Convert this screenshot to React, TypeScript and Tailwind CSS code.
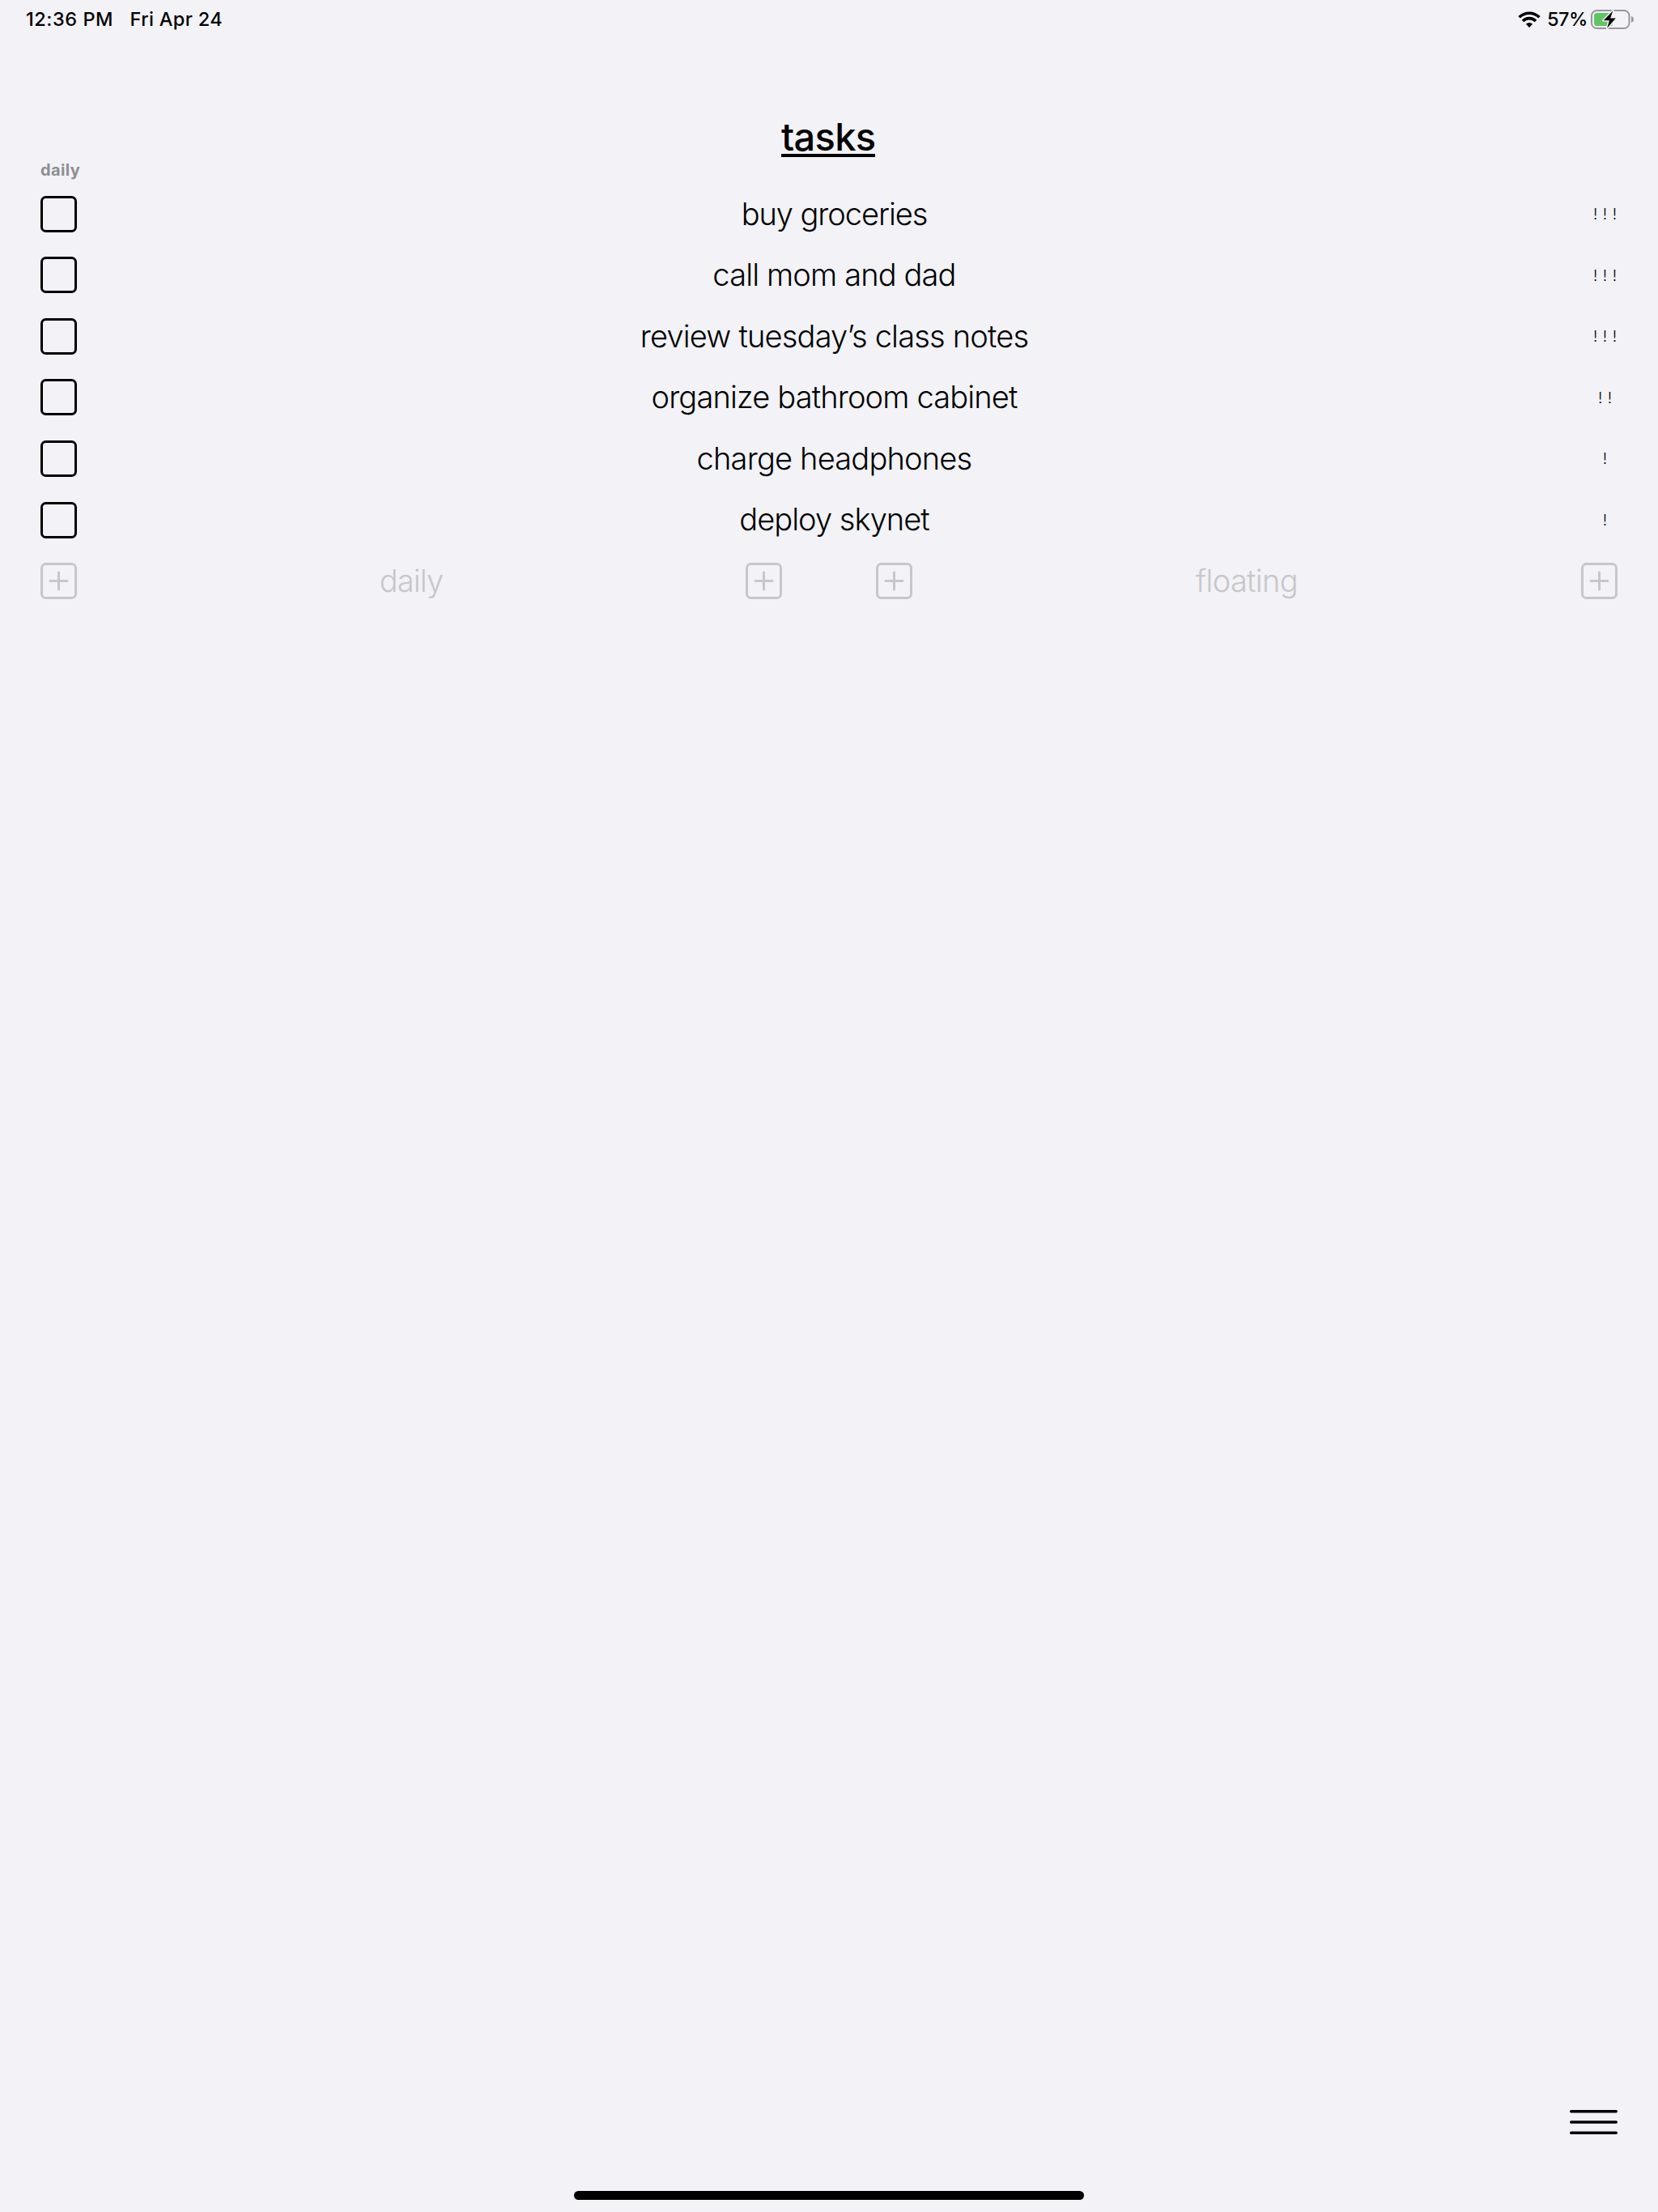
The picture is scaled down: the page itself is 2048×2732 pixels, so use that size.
const BG = '#f2f2f7';

type Task = { label: string; priority: string; spacing: string };

const tasks: Task[] = [
  { label: 'buy groceries', priority: '!!!', spacing: 'tracking-[-1.05px]' },
  { label: 'call mom and dad', priority: '!!!', spacing: 'tracking-[-0.85px]' },
  { label: 'review tuesday’s class notes', priority: '!!!', spacing: 'tracking-[-0.8px]' },
  { label: 'organize bathroom cabinet', priority: '!!', spacing: 'tracking-[-0.84px]' },
  { label: 'charge headphones', priority: '!', spacing: 'tracking-[-0.8px]' },
  { label: 'deploy skynet', priority: '!', spacing: 'tracking-[-0.95px]' },
];

function Wifi() {
  return (
    <svg className="block h-[22px] w-[28px]" viewBox="0 0 28 22" fill="none" stroke="#000" strokeWidth="3.6">
      <path d="M1.6 8.3a17.6 17.6 0 0 1 24.8 0" />
      <path d="M6 12.9a11.3 11.3 0 0 1 16 0" />
      <path d="M14 21l-4.1-4.2a5.8 5.8 0 0 1 8.2 0z" fill="#000" stroke="none" />
    </svg>
  );
}

function Battery() {
  return (
    <svg className="block h-[28px] w-[54px]" viewBox="0 0 54 28">
      <rect x="1" y="3" width="46.5" height="22" rx="6.5" fill="none" stroke="#98979b" strokeWidth="2" />
      <path d="M50 10c1.8.6 3 2.2 3 4s-1.2 3.4-3 4z" fill="#98979b" />
      <path d="M7.5 6H26.5V22H7.5A3.5 3.5 0 0 1 4 18.5V9.5A3.5 3.5 0 0 1 7.5 6z" fill="#62c466" />
      <path
        d="M27.2 3.5L15.7 15.3h7.2L20.2 24.7 30.8 12.5h-6.6z"
        fill="#000"
        stroke={BG}
        strokeWidth="3"
        paintOrder="stroke"
        strokeLinejoin="round"
      />
    </svg>
  );
}

function AddBox() {
  return (
    <svg className="block size-[45px] shrink-0" viewBox="0 0 45 45" fill="none" stroke="#c7c6cb" strokeWidth="3">
      <rect x="1.5" y="1.5" width="42" height="42" rx="5" />
      <path d="M22.5 12v21M12 22.5h21" strokeLinecap="round" />
    </svg>
  );
}

function TaskRow({ task }: { task: Task }) {
  return (
    <div className="flex h-[75.6px] items-center">
      <div className="size-[45px] shrink-0 rounded-[6.5px] border-[3px] border-black" />
      <div
        className={`flex-1 pr-[1px] pb-[1.2px] text-center text-[38px] leading-[46px] font-light whitespace-nowrap ${task.spacing}`}
      >
        {task.label}
      </div>
      <div className="flex w-[31px] justify-center pt-[2px] text-[19px] leading-6 font-light">
        {task.priority.split('').map((mark, i) => (
          <span key={i} className="w-[11.8px] shrink-0 text-center">
            {mark}
          </span>
        ))}
      </div>
    </div>
  );
}

export default function App() {
  return (
    <div className="flex h-[2732px] w-[2048px] flex-col bg-[#f2f2f7] font-['Inter',sans-serif] text-black">
      <header className="flex h-[48px] items-center justify-between pr-[29px] pl-[32px] text-[23.5px] leading-[48px] font-medium">
        <div className="flex gap-[20.5px]">
          <span className="tracking-[0.55px]">12:36 PM</span>
          <span className="tracking-[0.35px]">Fri Apr 24</span>
        </div>
        <div className="flex items-center">
          <Wifi />
          <span className="mr-[4px] ml-[8px] w-[50px] tracking-[-0.5px] whitespace-nowrap">57%</span>
          <Battery />
        </div>
      </header>

      <div className="flex h-[146px] items-end justify-center pr-[2px]">
        <h1 className="h-[60px] w-[116px] border-b-4 border-black text-center text-[47px] leading-[70px] font-medium tracking-[-0.7px] whitespace-nowrap">
          tasks
        </h1>
      </div>

      <div className="h-[32.3px] pl-[50px] text-[20px] leading-[32px] font-bold tracking-[0.35px] text-[#8e8e93]">
        daily
      </div>

      <main className="flex flex-col px-[50px]">
        {tasks.map((task) => (
          <TaskRow key={task.label} task={task} />
        ))}
        <div className="flex h-[75.6px] items-center text-[38px] leading-[46px] font-light text-[#c7c6cb]">
          <div className="flex w-[916px] items-center">
            <AddBox />
            <span className="-mt-[2px] flex-1 text-center tracking-[-0.9px]">daily</span>
            <AddBox />
          </div>
          <div className="ml-[116px] flex w-[916px] items-center">
            <AddBox />
            <span className="-mt-[2px] flex-1 text-center tracking-[-0.65px]">floating</span>
            <AddBox />
          </div>
        </div>
      </main>

      <footer className="mt-auto flex flex-col pb-[15px]">
        <svg
          className="mr-[50px] mb-[69px] block h-[32px] w-[59px] self-end"
          viewBox="0 0 59 32"
          stroke="#000"
          strokeWidth="3.5"
          strokeLinecap="round"
        >
          <path d="M1.75 2.75h55.5M1.75 16h55.5M1.75 29.25h55.5" />
        </svg>
        <div className="h-[11px] w-[630px] self-center rounded-full bg-black" />
      </footer>
    </div>
  );
}
